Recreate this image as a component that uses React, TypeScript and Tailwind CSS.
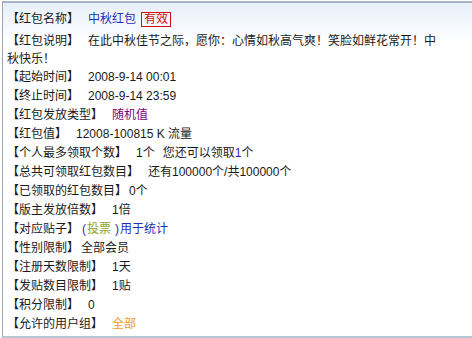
import React from "react";

const font = {
  fontFamily: '"Liberation Sans", "Noto Sans CJK SC", sans-serif',
};

function Row({ children, h = "h-[19px] leading-[19px]" }: { children: React.ReactNode; h?: string }) {
  return <div className={`${h} whitespace-nowrap`}>{children}</div>;
}

export default function App() {
  return (
    <div className="w-[472px] h-[338px] bg-white overflow-hidden pt-[1px] pl-[2px] text-[12px] text-[#1a1a1a]" style={font}>
      <div className="h-[337px] border-t-2 border-l border-b-2 border-t-[#a9b4cc] border-l-[#9ea4b0] border-b-[#b3c7d4] bg-gradient-to-b from-[#e7eff9] to-white to-[40px] pl-[4px] pt-[3px]">
        <Row h="h-[26px] flex items-center">
          <span>【红包名称】</span>
          <span className="ml-[9px] text-[#1c2fb8]">中秋红包</span>
          <span className="ml-[5px] border border-[#d01010] text-[#d01010] px-[2px] leading-[13px]">有效</span>
        </Row>
        <div className="leading-[18px]">
          【红包说明】<span className="ml-[9px]">在此中秋佳节之际，愿你：心情如秋高气爽！笑脸如鲜花常开！中</span>
          <br />
          <span>秋快乐！</span>
        </div>
        <Row>
          【起始时间】<span className="ml-[9px]">2008-9-14 00:01</span>
        </Row>
        <Row>
          【终止时间】<span className="ml-[9px]">2008-9-14 23:59</span>
        </Row>
        <Row>
          【红包发放类型】<span className="ml-[9px] text-[#800080]">随机值</span>
        </Row>
        <Row>
          【红包值】<span className="ml-[9px]">12008-100815 K 流量</span>
        </Row>
        <Row>
          【个人最多领取个数】<span className="ml-[9px]">1个</span>
          <span className="ml-[8px]">您还可以领取</span>
          <span className="text-[#3a10c8]">1</span>个
        </Row>
        <Row>
          【总共可领取红包数目】<span className="ml-[9px]">还有100000个/共100000个</span>
        </Row>
        <Row>
          【已领取的红包数目】<span className="ml-[2px]">0个</span>
        </Row>
        <Row>
          【版主发放倍数】<span className="ml-[9px]">1倍</span>
        </Row>
        <Row>
          【对应贴子】<span className="ml-[3px] text-[#1c2fb8]">(</span>
          <span className="ml-[1px] text-[#8fa62a]">投票</span>
          <span className="ml-[4px] text-[#1c2fb8]">)</span>
          <span className="ml-[1px] text-[#1c2fb8]">用于统计</span>
        </Row>
        <Row>
          【性别限制】<span className="ml-[2px]">全部会员</span>
        </Row>
        <Row>
          【注册天数限制】<span className="ml-[9px]">1天</span>
        </Row>
        <Row>
          【发贴数目限制】<span className="ml-[9px]">1贴</span>
        </Row>
        <Row>
          【积分限制】<span className="ml-[9px]">0</span>
        </Row>
        <Row>
          【允许的用户组】<span className="ml-[9px] text-[#f09a1a]">全部</span>
        </Row>
      </div>
    </div>
  );
}
